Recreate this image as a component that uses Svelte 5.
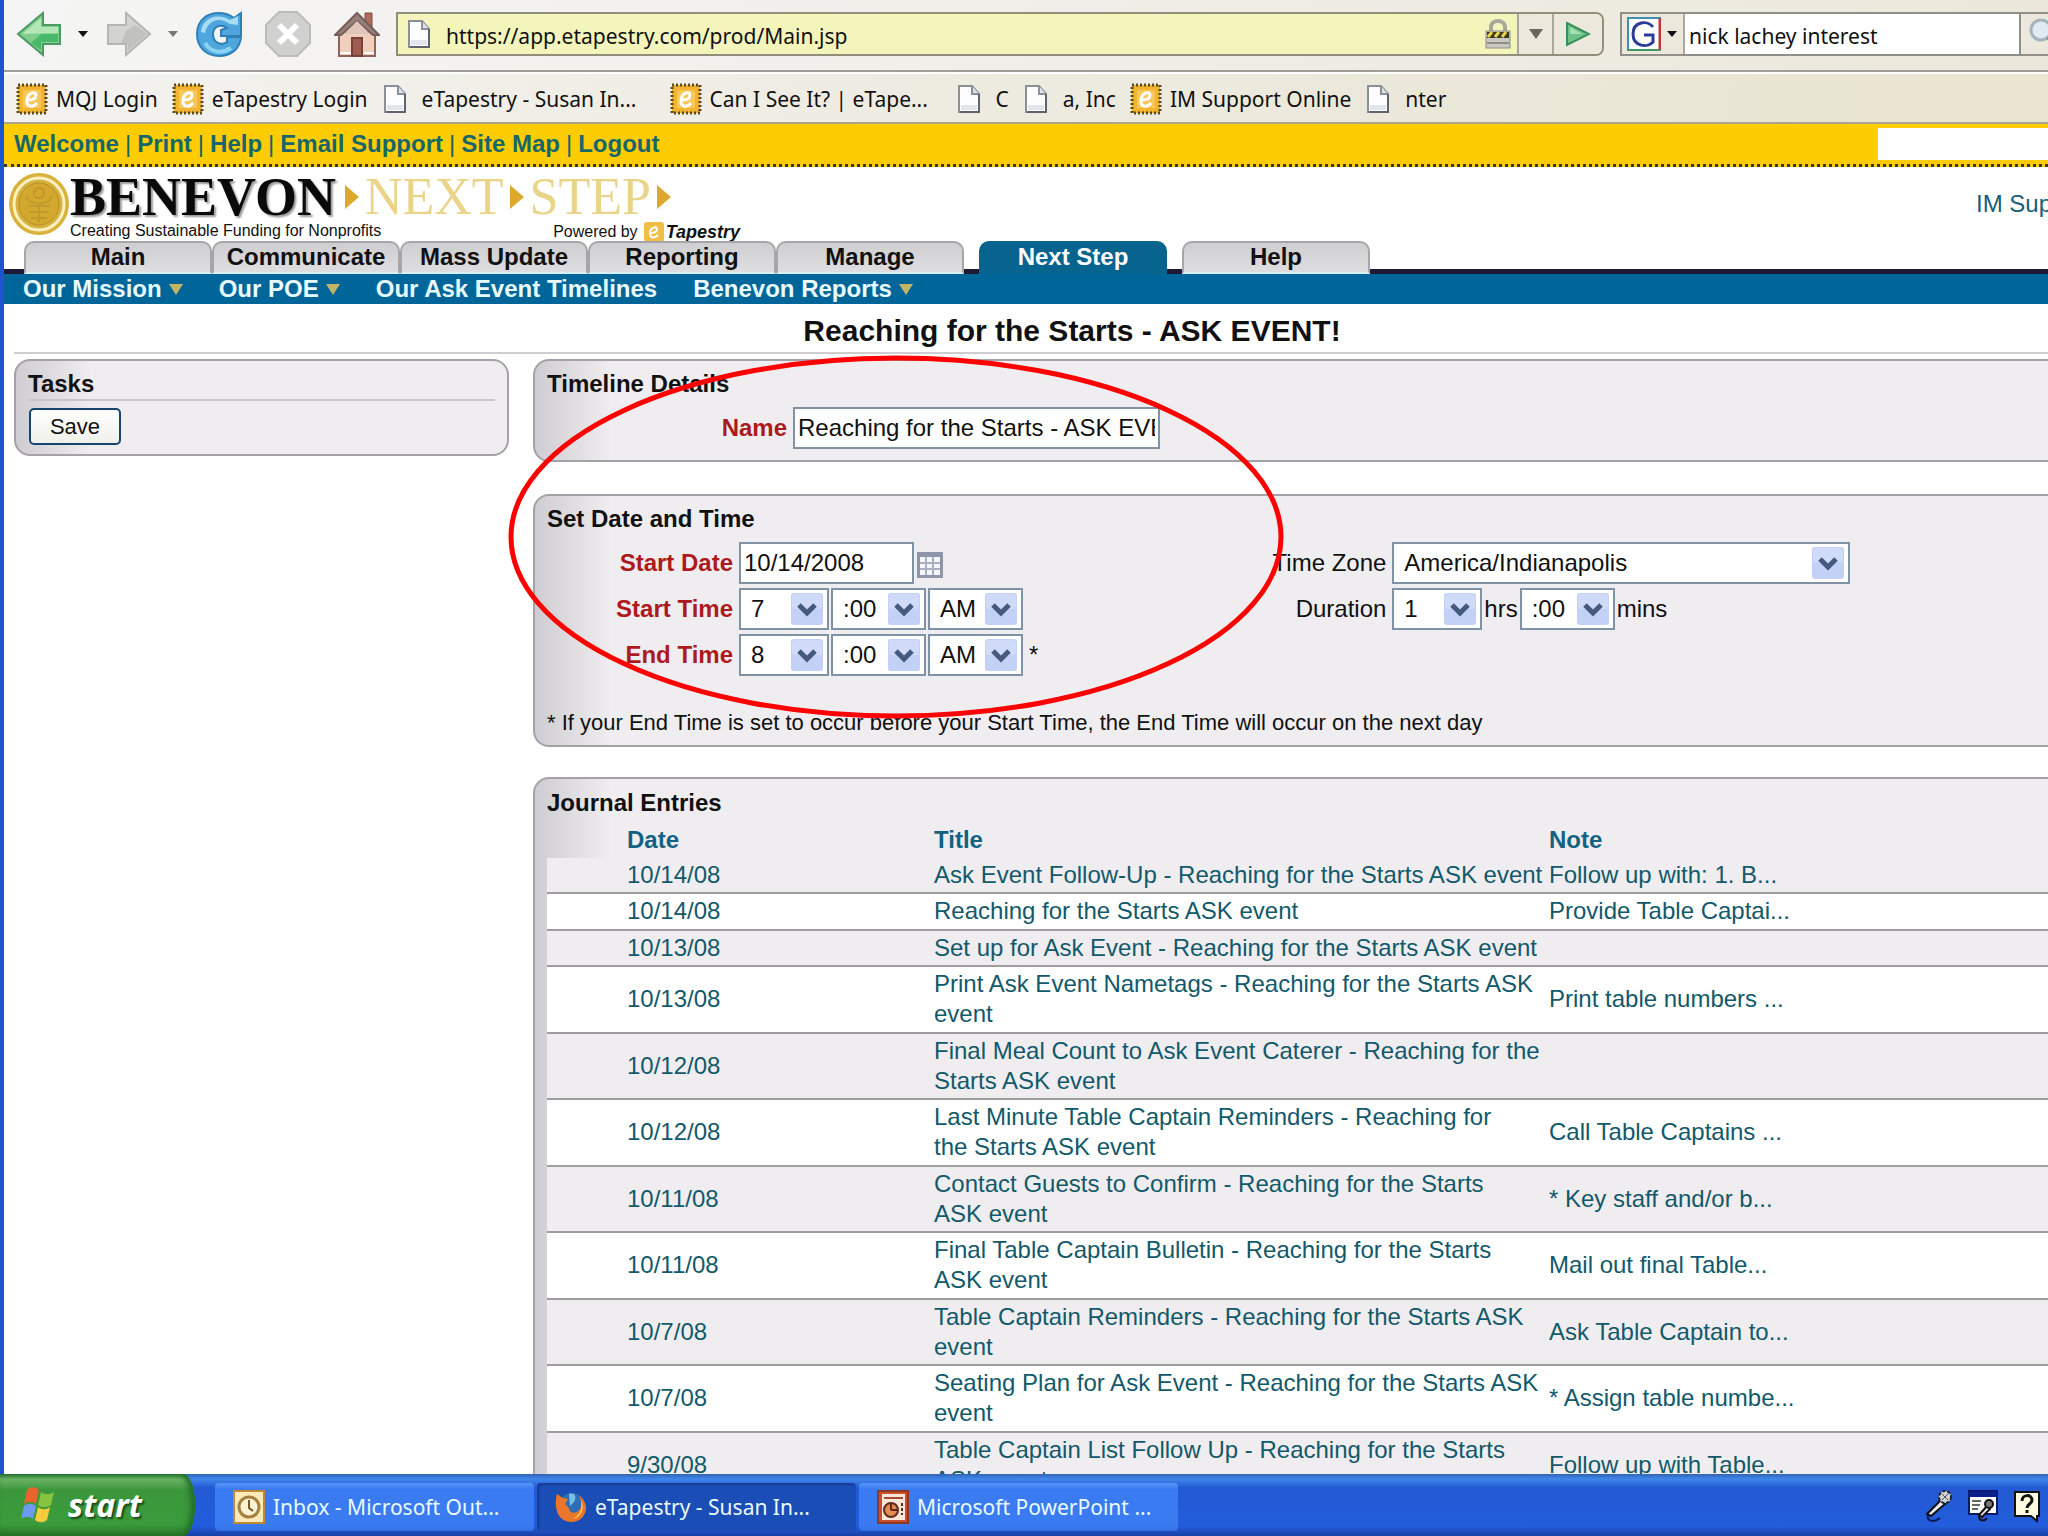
<script>
	let name = "Reaching for the Starts - ASK EVENT!";
	let startDate = "10/14/2008";
	let search = "nick lachey interest";
	let url = "https://app.etapestry.com/prod/Main.jsp";
	let find = "";

	const bookmarks = [
		{ icon: 'e', text: 'MQJ Login' },
		{ icon: 'e', text: 'eTapestry Login' },
		{ icon: 'doc', text: 'eTapestry - Susan In...', long: true },
		{ icon: 'e', text: 'Can I See It? | eTape...', long: true },
		{ icon: 'doc', text: 'C' },
		{ icon: 'doc', text: 'a, Inc' },
		{ icon: 'e', text: 'IM Support Online' },
		{ icon: 'doc', text: 'nter' }
	];

	const links = ['Welcome', 'Print', 'Help', 'Email Support', 'Site Map', 'Logout'];
	const tabs = ['Main', 'Communicate', 'Mass Update', 'Reporting', 'Manage'];

	const menu = [
		{ text: 'Our Mission', arrow: true },
		{ text: 'Our POE', arrow: true },
		{ text: 'Our Ask Event Timelines', arrow: false },
		{ text: 'Benevon Reports', arrow: true }
	];

	const entries = [
		{ date: '10/14/08', title: 'Ask Event Follow-Up - Reaching for the Starts ASK event', note: 'Follow up with: 1. B...' },
		{ date: '10/14/08', title: 'Reaching for the Starts ASK event', note: 'Provide Table Captai...' },
		{ date: '10/13/08', title: 'Set up for Ask Event - Reaching for the Starts ASK event', note: '' },
		{ date: '10/13/08', title: 'Print Ask Event Nametags - Reaching for the Starts ASK\nevent', note: 'Print table numbers ...' },
		{ date: '10/12/08', title: 'Final Meal Count to Ask Event Caterer - Reaching for the\nStarts ASK event', note: '' },
		{ date: '10/12/08', title: 'Last Minute Table Captain Reminders - Reaching for\nthe Starts ASK event', note: 'Call Table Captains ...' },
		{ date: '10/11/08', title: 'Contact Guests to Confirm - Reaching for the Starts\nASK event', note: '* Key staff and/or b...' },
		{ date: '10/11/08', title: 'Final Table Captain Bulletin - Reaching for the Starts\nASK event', note: 'Mail out final Table...' },
		{ date: '10/7/08', title: 'Table Captain Reminders - Reaching for the Starts ASK\nevent', note: 'Ask Table Captain to...' },
		{ date: '10/7/08', title: 'Seating Plan for Ask Event - Reaching for the Starts ASK\nevent', note: '* Assign table numbe...' },
		{ date: '9/30/08', title: 'Table Captain List Follow Up - Reaching for the Starts\nASK event', note: 'Follow up with Table...' }
	];
</script>

{#snippet doc()}
	<svg class="page" viewBox="0 0 22 28" aria-hidden="true">
		<path d="M1 1h13l7 8v18H1z" fill="#fdfdff" stroke="#8b8f98" stroke-width="2" />
		<path d="M3 20h16v5H3z" fill="#e3e5ec" />
		<path d="M14 1v8h7" fill="#dfe2ea" stroke="#8b8f98" stroke-width="2" />
		<path d="M21 9v18H2" fill="none" stroke="#5f636e" stroke-width="2" />
	</svg>
{/snippet}

{#snippet stamp()}
	<svg class="stamp" viewBox="0 0 32 32" aria-hidden="true">
		<rect x="2" y="2" width="28" height="28" fill="#f0b32c" stroke="#5c4a22" stroke-width="3" stroke-dasharray="2 2" />
		<rect x="4" y="4" width="24" height="24" fill="#f3b531" />
		<rect x="7" y="7" width="18" height="18" fill="#f7c75a" />
		<path d="M12 17c5 0 8-2 8-5 0-4-8-3-9 5-1 7 6 8 10 3" fill="none" stroke="#fff" stroke-width="3" />
	</svg>
{/snippet}

{#snippet pick(id, value, size, label)}
	<span class="pick {size}">
		<select {id} aria-label={label}><option>{value}</option></select>
		<svg viewBox="0 0 32 32" aria-hidden="true">
			<rect width="32" height="32" rx="3" fill="#c3d1f6" />
			<rect x="1" y="1" width="30" height="15" rx="3" fill="#d0dbf9" />
			<path d="M8 12l8 8 8-8" fill="none" stroke="#46597f" stroke-width="5" />
		</svg>
	</span>
{/snippet}

<div class="screen">
	<div class="browser">
		<div class="toolbar">
			<button class="ico back" aria-label="Back">
				<svg viewBox="0 0 46 46">
					<path d="M2 23L27 2v12h17v19H27v11z" fill="#7fce8e" stroke="#4c9a63" stroke-width="2" />
					<path d="M6 23L25 7v9h17v6z" fill="#b5e6b5" />
					<path d="M15 32l10-9h17v8H25v8z" fill="#49b868" />
				</svg>
			</button>
			<svg class="caret" viewBox="0 0 10 6"><path d="M0 0h10L5 6z" fill="#111" /></svg>
			<button class="ico forward" aria-label="Forward">
				<svg viewBox="0 0 46 46">
					<path d="M44 23L20 2v12H2v19h18v11z" fill="#d3d3d2" stroke="#b5b5b4" stroke-width="2" />
					<path d="M20 20l9-6 12 9-19 17v-8h-7z" fill="#c1c1c0" />
				</svg>
			</button>
			<svg class="caret" viewBox="0 0 10 6"><path d="M0 0h10L5 6z" fill="#777" /></svg>
			<button class="ico reload" aria-label="Reload">
				<svg viewBox="0 0 46 46">
					<path d="M45 2v23H25v-6l6-2c-7-5-14-1-14 6 0 9 8 12 14 8v-5h14C44 38 35 45 23 45 10 45 1 36 1 23S10 2 23 2c6 0 11 2 15 5z" fill="#4ea6dc" stroke="#2f7fb9" stroke-width="2" />
					<path d="M5 21C6 8 20 1 34 9l8-4v9L34 13C22 5 12 10 9 22z" fill="#a7dcf5" />
					<path d="M9 32c6 10 17 11 26 5" fill="none" stroke="#8bd3f3" stroke-width="4" />
				</svg>
			</button>
			<button class="ico stop" aria-label="Stop">
				<svg viewBox="0 0 46 46">
					<path d="M14 1h18l13 13v18L32 45H14L1 32V14z" fill="#d0d0cf" stroke="#bcbcbb" stroke-width="2" />
					<path d="M14 14l18 18M32 14L14 32" stroke="#fff" stroke-width="6" />
				</svg>
			</button>
			<button class="ico home" aria-label="Home">
				<svg viewBox="0 0 46 46">
					<path d="M31 2h7v14l-7-6z" fill="#b06b5d" stroke="#7d4f47" />
					<path d="M5 21h36v24H5z" fill="#f1cdbd" stroke="#8e6359" stroke-width="2" />
					<path d="M1 24L23 2l22 22h-6L23 10 7 24z" fill="#98807a" stroke="#745e59" stroke-width="2" />
					<path d="M23 10l13 13H10z" fill="#dec6bb" />
					<path d="M18 27h10v18H18z" fill="#9d5d50" stroke="#774137" stroke-width="2" />
					<path d="M6 42h11M30 42h10" stroke="#fff" stroke-width="2" />
				</svg>
			</button>
			<div class="address">
				{@render doc()}
				<input aria-label="Address" bind:value={url}>
				<svg class="lock" viewBox="0 0 26 30" aria-hidden="true">
					<path d="M6 13V8c0-8 14-8 14 0v5" fill="none" stroke="#a7a79c" stroke-width="4" />
					<rect x="1" y="12" width="24" height="17" fill="#c9c9c4" stroke="#8d8d84" />
					<path d="M2 13h22v6H2z" fill="#3b3920" />
					<path d="M3 18l4-5M10 18l4-5M17 18l4-5" stroke="#e9d452" stroke-width="3" />
					<path d="M2 24h22" stroke="#8d8d84" stroke-width="2" />
				</svg>
				<button class="drop" aria-label="History"><svg viewBox="0 0 14 10"><path d="M0 0h14L7 10z" fill="#666660" /></svg></button>
				<button class="go" aria-label="Go"><svg viewBox="0 0 26 26"><path d="M2 2l22 11L2 24z" fill="#6fc389" stroke="#37905a" stroke-width="2" /><path d="M5 6l12 7H5z" fill="#a4e0b2" /></svg></button>
			</div>
			<div class="searchbox">
				<button class="engine" aria-label="Search engine">
					<svg class="g" viewBox="0 0 34 34">
						<rect x="1" y="1" width="32" height="32" fill="#fff" stroke="#3f8fb0" stroke-width="2" />
						<path d="M33 1v32" stroke="#c3352f" stroke-width="3" />
						<path d="M1 33h32" stroke="#3b9a5c" stroke-width="2" />
						<path d="M26 10C21 3 6 4 6 17s15 14 20 8v-7h-9" fill="none" stroke="#2b3c9b" stroke-width="3" />
					</svg>
					<svg class="caret" viewBox="0 0 10 6"><path d="M0 0h10L5 6z" fill="#111" /></svg>
				</button>
				<input aria-label="Search the web" bind:value={search}>
				<button class="glass" aria-label="Search"><svg viewBox="0 0 34 34"><circle cx="13" cy="13" r="10" fill="#dfeaf2" stroke="#a6b3bd" stroke-width="3" /><path d="M20 20l12 12" stroke="#8c8c8c" stroke-width="5" /></svg></button>
			</div>
		</div>

		<nav class="bookmarks">
			{#each bookmarks as b}
				<a href="#top" class={b.icon} class:long={b.long}>
					{#if b.icon == 'e'}{@render stamp()}{:else}{@render doc()}{/if}
					{b.text}
				</a>
			{/each}
		</nav>

		<div class="top">
			<nav>
				{#each links as l, i}{#if i > 0}<span>|</span>{/if}<a href="#top">{l}</a>{/each}
			</nav>
			<input aria-label="Find" bind:value={find}>
		</div>

		<header>
			<svg class="seal" viewBox="0 0 62 64" aria-hidden="true">
				<ellipse cx="31" cy="32" rx="30" ry="31" fill="#d9b23c" />
				<ellipse cx="31" cy="32" rx="25" ry="26" fill="#d6b040" stroke="#fbf0c0" stroke-width="3" />
				<ellipse cx="31" cy="32" rx="20" ry="21" fill="#d2a82f" stroke="#b98f22" stroke-width="1" />
				<circle cx="31" cy="21" r="5" fill="none" stroke="#bf972a" stroke-width="2" />
				<path d="M18 24c2 10 24 10 26 0M20 34h22M21 40h20M23 46h16M31 30v20" fill="none" stroke="#c09a2c" stroke-width="2" />
			</svg>
			<div class="brand">
				<div class="words">
					<b>BENEVON</b>
					<svg viewBox="0 0 16 26"><path d="M1 1l14 12L1 25z" fill="#dba92c" /></svg>
					<span>NEXT</span>
					<svg viewBox="0 0 16 26"><path d="M1 1l14 12L1 25z" fill="#dba92c" /></svg>
					<span>STEP</span>
					<svg viewBox="0 0 16 26"><path d="M1 1l14 12L1 25z" fill="#dba92c" /></svg>
				</div>
				<div class="tagline">
					<span>Creating Sustainable Funding for Nonprofits</span>
					<span class="powered">Powered by
						<svg viewBox="0 0 20 20"><rect width="20" height="20" rx="3" fill="#f0bd45" /><path d="M6 11c4 0 7-1 7-4s-7-2-7 4 5 5 8 2" fill="none" stroke="#fff" stroke-width="2" /></svg><i>Tapestry</i></span>
				</div>
			</div>
			<a class="user" href="#top">IM Sup</a>
		</header>

		<nav class="tabs">
			{#each tabs as t}<a href="#top">{t}</a>{/each}
			<a href="#top" class="apart on">Next Step</a>
			<a href="#top" class="apart">Help</a>
		</nav>
		<nav class="menu">
			{#each menu as m}
				<a href="#top">{m.text}{#if m.arrow}<svg viewBox="0 0 14 11"><path d="M0 0h14L7 11z" fill="#c3b566" /></svg>{/if}</a>
			{/each}
		</nav>

		<main>
			<h1>Reaching for the Starts - ASK EVENT!</h1>
			<div class="columns">
				<aside class="panel">
					<h2>Tasks</h2>
					<button class="save">Save</button>
				</aside>

				<div class="content">
					<section class="panel details">
						<h2>Timeline Details</h2>
						<div class="field">
							<label class="req" for="name">Name</label>
							<input id="name" bind:value={name}>
						</div>
					</section>

					<section class="panel when">
						<h2>Set Date and Time</h2>
						<div class="cols">
							<div class="grid">
								<label class="req" for="date">Start Date</label>
								<div class="row">
									<input id="date" bind:value={startDate}>
									<button class="cal" aria-label="Calendar">
										<svg viewBox="0 0 28 28">
											<rect x="1" y="1" width="26" height="26" fill="#8e95a8" />
											<rect x="4" y="6" width="20" height="18" fill="#f4f6fb" />
											<path d="M4 12h20M4 18h20M10 6v18M17 6v18" stroke="#a9b0c3" stroke-width="2" />
										</svg>
									</button>
								</div>
								<label class="req" for="sh">Start Time</label>
								<div class="row">
									{@render pick('sh', '7', 'small', 'Start hour')}
									{@render pick('sm', ':00', 'mid', 'Start minute')}
									{@render pick('sa', 'AM', 'mid', 'Start AM or PM')}
								</div>
								<label class="req" for="eh">End Time</label>
								<div class="row">
									{@render pick('eh', '8', 'small', 'End hour')}
									{@render pick('em', ':00', 'mid', 'End minute')}
									{@render pick('ea', 'AM', 'mid', 'End AM or PM')}
									<span class="star">*</span>
								</div>
							</div>
							<div class="grid">
								<label for="tz">Time Zone</label>
								<div class="row">{@render pick('tz', 'America/Indianapolis', 'wide', 'Time Zone')}</div>
								<label for="dh">Duration</label>
								<div class="row">
									{@render pick('dh', '1', 'small', 'Duration hours')}
									<span>hrs</span>
									{@render pick('dm', ':00', 'mid', 'Duration minutes')}
									<span>mins</span>
								</div>
							</div>
						</div>
						<p>* If your End Time is set to occur before your Start Time, the End Time will occur on the next day</p>
					</section>

					<section class="panel journal">
						<h2>Journal Entries</h2>
						<table>
							<colgroup><col class="c1"><col class="c2"><col></colgroup>
							<thead>
								<tr><th>Date</th><th>Title</th><th>Note</th></tr>
							</thead>
							<tbody>
								{#each entries as e}
									<tr>
										<td><a href="#top">{e.date}</a></td>
										<td><a href="#top">{e.title}</a></td>
										<td><a href="#top">{e.note}</a></td>
									</tr>
								{/each}
							</tbody>
						</table>
					</section>
				</div>

				<svg class="ring" viewBox="0 0 776 364" aria-hidden="true">
					<ellipse cx="388" cy="182" rx="385" ry="179" fill="none" stroke="#fe0000" stroke-width="5" />
				</svg>
			</div>
		</main>
	</div>

	<footer>
		<button class="start">
			<svg viewBox="0 0 38 38" aria-hidden="true">
				<path d="M7 4c4-4 8-3 12 0l-3 14c-4-3-8-3-12 0z" fill="#e8642c" />
				<path d="M21 6c4 3 8 3 13 0l-3 13c-5 3-9 3-13 0z" fill="#86c440" />
				<path d="M4 20c4-3 8-3 12 0l-3 13c-4-3-8-3-12 0z" fill="#6d9af0" />
				<path d="M18 21c4 3 8 3 12 0l-3 13c-4 3-8 3-12 0z" fill="#f6cb3c" />
			</svg>
			<i>start</i>
		</button>
		<button class="task">
			<svg viewBox="0 0 32 34" aria-hidden="true">
				<rect x="1" y="1" width="30" height="32" fill="#fbe9b8" stroke="#c08a35" stroke-width="2" />
				<circle cx="16" cy="17" r="10" fill="#fdf3d3" stroke="#a58140" stroke-width="3" />
				<path d="M16 10v8l4 3" fill="none" stroke="#75592a" stroke-width="2" />
			</svg>
			Inbox - Microsoft Out...
		</button>
		<button class="task active">
			<svg viewBox="0 0 32 32" aria-hidden="true">
				<circle cx="17" cy="15" r="13" fill="#2d6fb4" />
				<path d="M14 3c6-2 8 3 5 8l-4 4z" fill="#79bfe4" />
				<path d="M2 3l6 4 5 1-3 5 4 4c0 7 11 6 12-2 1-4-1-8-2-10 7 4 9 13 5 19-5 9-18 9-24 2C0 20 0 10 2 3z" fill="#e9762b" />
				<path d="M26 9c4 8 1 17-8 19 8-5 9-11 8-19z" fill="#f8c850" />
			</svg>
			eTapestry - Susan In...
		</button>
		<button class="task">
			<svg viewBox="0 0 32 34" aria-hidden="true">
				<rect x="1" y="1" width="30" height="32" fill="#c9502f" stroke="#8d3822" stroke-width="2" />
				<rect x="5" y="4" width="23" height="26" fill="#fde6da" />
				<path d="M7 8h19" stroke="#a84a30" stroke-width="2" />
				<circle cx="14" cy="20" r="7" fill="#e88a4e" stroke="#5e2b1c" stroke-width="2" />
				<path d="M14 20v-7M14 20h7" stroke="#5e2b1c" stroke-width="2" />
				<path d="M25 13v12" stroke="#5e2b1c" stroke-width="2" stroke-dasharray="3 2" />
			</svg>
			Microsoft PowerPoint ...
		</button>
		<div class="tray">
			<svg viewBox="0 0 30 34" aria-hidden="true">
				<path d="M3 25L17 11l4 4L7 27z" fill="#e6e9ee" stroke="#111" stroke-width="2" />
				<circle cx="21" cy="8" r="6" fill="#cfd2d6" stroke="#222" stroke-width="2" stroke-dasharray="3 2" />
				<path d="M18 5l6 6M24 5l-6 6" stroke="#555" />
				<path d="M4 26c-2 6 6 8 12 3" fill="none" stroke="#0a1550" stroke-width="2" />
			</svg>
			<svg viewBox="0 0 30 34" aria-hidden="true">
				<rect x="1" y="2" width="28" height="23" fill="#fff" stroke="#0a1a66" stroke-width="2" />
				<rect x="1" y="2" width="28" height="6" fill="#0b1f8c" />
				<path d="M4 12h9M4 16h8M4 20h6" stroke="#666" stroke-width="2" />
				<path d="M11 26l8-9 3 3-8 8z" fill="#eee" stroke="#111" stroke-width="2" />
				<circle cx="21" cy="15" r="4" fill="#777" stroke="#111" stroke-width="2" />
				<path d="M11 27c0 6 6 5 8 2" fill="none" stroke="#111" stroke-width="2" />
			</svg>
			<svg viewBox="0 0 30 34" aria-hidden="true">
				<path d="M3 3h24v24h-2v5l-6-5H3z" fill="#fffbe0" stroke="#111" stroke-width="2" />
				<path d="M10 12c0-7 10-7 10-1 0 4-5 4-5 8M15 21v3" fill="none" stroke="#111" stroke-width="3" />
			</svg>
		</div>
	</footer>
</div>

<style>
	:global(body) {
		background: #fff;
	}

	* {
		box-sizing: border-box;
	}

	.screen {
		height: 100vh;
		display: flex;
		flex-direction: column;
		overflow: hidden;
		font: 24px/30px "Liberation Sans", Arial, sans-serif;
		color: #111;
	}

	.browser {
		flex: 1;
		min-height: 0;
		overflow: hidden;
		border-left: 4px solid #1c55cf;
	}

	button, input, select {
		font: inherit;
		color: inherit;
		margin: 0;
		padding: 0;
		border: 0;
		border-radius: 0;
		background: none;
	}

	a {
		color: inherit;
		text-decoration: none;
		white-space: nowrap;
	}

	svg {
		display: block;
		flex: none;
	}

	.toolbar, .bookmarks, footer {
		font-family: "Noto Sans", Tahoma, sans-serif;
		font-size: 21px;
	}

	/* browser chrome */
	.toolbar {
		display: flex;
		align-items: center;
		height: 72px;
		padding: 0 0 2px 12px;
		background: linear-gradient(100deg, #f5f5f5, #efede6 60%, #ebe7da);
		border-bottom: 2px solid #9f9d98;
	}

	.ico svg {
		width: 46px;
		height: 46px;
	}

	.caret {
		width: 10px;
		height: 6px;
	}

	.back, .forward {
		margin-right: 16px;
	}

	.forward {
		margin-left: 18px;
	}

	.reload {
		margin-left: 18px;
	}

	.stop, .home {
		margin-left: 23px;
	}

	.address {
		flex: 1;
		display: flex;
		align-items: center;
		height: 44px;
		margin-left: 16px;
		padding-left: 10px;
		border: 2px solid #918f7c;
		border-radius: 0 8px 8px 0;
		background: #f3f5bb;
	}

	.address input {
		flex: 1;
		min-width: 0;
		height: 30px;
		margin: 3px 0 0 16px;
	}

	.page {
		width: 22px;
		height: 28px;
	}

	.lock {
		width: 26px;
		height: 30px;
		margin-right: 6px;
	}

	.drop, .go {
		height: 100%;
		display: grid;
		place-items: center;
		background: #ece9dc;
		border-left: 2px solid #aaa899;
	}

	.drop {
		width: 35px;
	}

	.go {
		width: 50px;
		border-radius: 0 6px 6px 0;
	}

	.drop svg {
		width: 14px;
		height: 10px;
	}

	.go svg {
		width: 26px;
		height: 26px;
	}

	.searchbox {
		display: flex;
		width: 428px;
		height: 44px;
		margin-left: 16px;
		border: 2px solid #918f8a;
		border-right: 0;
		background: #fff;
	}

	.searchbox input {
		flex: 1;
		min-width: 0;
		padding: 3px 0 0 4px;
	}

	.engine {
		display: flex;
		align-items: center;
		gap: 6px;
		padding: 0 6px 0 5px;
		background: #ece9dc;
		border-right: 2px solid #aaa8a0;
	}

	.g {
		width: 34px;
		height: 34px;
	}

	.glass {
		width: 29px;
		overflow: hidden;
		padding-left: 7px;
		background: #ece9dc;
		border-left: 2px solid #918f8a;
	}

	.glass svg {
		width: 34px;
		height: 34px;
	}

	.bookmarks {
		display: flex;
		align-items: center;
		gap: 14px;
		height: 52px;
		padding: 2px 0 0 12px;
		background: linear-gradient(100deg, #f3f2ef, #ebe8da 70%, #e9e5d0);
		border-top: 2px solid #fff;
		border-bottom: 2px solid #a9a48c;
	}

	.bookmarks a {
		display: flex;
		align-items: center;
		gap: 8px;
	}

	.bookmarks .doc {
		gap: 16px;
		margin-left: 2px;
	}

	.bookmarks .long {
		width: 272px;
	}

	.stamp {
		width: 32px;
		height: 32px;
	}

	/* site header */
	.top {
		display: flex;
		justify-content: space-between;
		height: 43px;
		background: #fdcc02;
		border-bottom: 3px dotted #3c3524;
	}

	.top nav {
		padding: 5px 0 0 10px;
		font-weight: bold;
		color: #17666a;
	}

	.top span {
		margin: 0 6px;
		font-weight: normal;
	}

	.top input {
		width: 170px;
		height: 32px;
		margin-top: 4px;
		background: #fff;
	}

	header {
		display: flex;
		height: 74px;
		padding: 5px 0 0 4px;
	}

	.seal {
		width: 62px;
		height: 64px;
	}

	.words {
		display: flex;
		align-items: center;
		gap: 5px;
		height: 50px;
		font: 52px/50px "Liberation Serif", "Times New Roman", serif;
		color: #ead48a;
	}

	.words b {
		color: #0a0a0a;
		font-size: 54px;
		text-shadow: 2px 2px 2px #999;
		margin-right: 3px;
	}

	.words svg {
		width: 16px;
		height: 26px;
	}

	.tagline {
		display: flex;
		justify-content: space-between;
		width: 670px;
		font-size: 16px;
		line-height: 18px;
	}

	.powered {
		display: flex;
		gap: 2px;
		align-items: center;
	}

	.powered svg {
		width: 20px;
		height: 20px;
		margin-left: 4px;
	}

	.powered i {
		font-size: 18px;
		font-weight: bold;
	}

	.user {
		margin-left: auto;
		width: 72px;
		padding-top: 17px;
		color: #17607a;
	}

	.tabs {
		display: flex;
		height: 33px;
		padding-left: 20px;
		background: linear-gradient(to top, #1e1a38 5px, transparent 5px);
	}

	.tabs a {
		width: 188px;
		border: 2px solid #a6a5a7;
		border-bottom: 2px solid #d8f0f8;
		border-radius: 10px 10px 0 0;
		background: linear-gradient(#cfced0, #dedddf);
		font-weight: bold;
		line-height: 28px;
		text-align: center;
	}

	.tabs .apart {
		margin-left: 15px;
	}

	.tabs .on {
		background: #07648f;
		border-color: #07648f;
		color: #fff;
	}

	.menu {
		display: flex;
		height: 30px;
		gap: 36px;
		padding-left: 19px;
		background: #006699;
		color: #e8fbff;
		font-weight: bold;
	}

	.menu a {
		display: flex;
		align-items: center;
		gap: 7px;
	}

	.menu svg {
		width: 14px;
		height: 11px;
	}

	/* page body, wider than the window */
	main {
		margin: 0 -82px 0 10px;
	}

	h1 {
		margin: 0;
		height: 50px;
		border-bottom: 2px solid #cfcdd0;
		font-size: 30px;
		line-height: 54px;
		text-align: center;
	}

	h2 {
		margin: 0;
		font-size: 24px;
		line-height: 30px;
	}

	.columns {
		position: relative;
		display: flex;
		align-items: flex-start;
		gap: 24px;
		padding-top: 5px;
	}

	.panel {
		border: 2px solid #a4a2a6;
		border-radius: 16px;
		background: linear-gradient(to right, #cfcdd1, #efedef 76px);
		padding: 8px 12px;
	}

	aside {
		width: 495px;
		height: 97px;
	}

	aside h2 {
		border-bottom: 2px solid #c8c6ca;
		height: 32px;
		margin-bottom: 7px;
	}

	.save {
		width: 92px;
		height: 37px;
		margin-left: 1px;
		border: 2px solid #17456f;
		border-radius: 5px;
		background: linear-gradient(#fff, #f0f0ea);
		font-size: 22px;
	}

	.content {
		flex: 1;
		min-width: 0;
	}

	.req {
		color: #ac1a20;
		font-weight: bold;
	}

	.details {
		height: 103px;
		margin-bottom: 32px;
	}

	.field {
		display: flex;
		align-items: center;
		gap: 6px;
		padding-top: 8px;
	}

	.field label {
		width: 240px;
		text-align: right;
	}

	.content input, .pick {
		height: 42px;
		border: 2px solid #7f93a5;
		background: #fff;
	}

	.content input {
		padding: 0 3px;
	}

	#name {
		width: 367px;
	}

	#date {
		width: 175px;
	}

	.when {
		height: 253px;
		margin-bottom: 30px;
	}

	.cols {
		display: flex;
		align-items: flex-start;
	}

	.grid {
		display: grid;
		grid-template-columns: 186px auto;
		gap: 4px 6px;
		align-items: center;
		padding-top: 8px;
	}

	.grid + .grid {
		margin-left: 162px;
	}

	.grid label {
		text-align: right;
	}

	.row {
		display: flex;
		align-items: center;
		gap: 2px;
	}

	.cal {
		margin-top: 4px;
	}

	.cal svg {
		width: 28px;
		height: 28px;
	}

	.star {
		margin-left: 4px;
	}

	.pick {
		position: relative;
		display: block;
	}

	.small {
		width: 90px;
	}

	.mid {
		width: 95px;
	}

	.wide {
		width: 458px;
	}

	.pick select {
		appearance: none;
		width: 100%;
		height: 100%;
		padding-left: 10px;
	}

	.pick svg {
		position: absolute;
		right: 4px;
		top: 3px;
		width: 32px;
		height: 32px;
		pointer-events: none;
	}

	p {
		margin: 32px 0 0;
		font-size: 22px;
	}

	.journal {
		border-radius: 16px 16px 0 0;
		padding-top: 9px;
	}

	table {
		width: 100%;
		border-collapse: separate;
		border-spacing: 0;
		table-layout: fixed;
		color: #12596b;
	}

	.c1 {
		width: 387px;
	}

	.c2 {
		width: 615px;
	}

	th {
		padding: 7px 0 3px;
		text-align: left;
		color: #136283;
	}

	td {
		padding: 2px 0;
		height: 36px;
		border-bottom: 2px solid #9f9da0;
	}

	td a {
		white-space: pre;
	}

	th:first-child, td:first-child {
		padding-left: 80px;
	}

	tbody tr {
		background: #efedef;
	}

	tbody tr:nth-child(even) {
		background: #fff;
	}

	tbody tr:nth-child(even) td {
		padding-bottom: 3px;
	}

	.ring {
		position: absolute;
		left: 494px;
		top: 1px;
		width: 776px;
		height: 364px;
		pointer-events: none;
	}

	/* taskbar */
	footer {
		display: flex;
		align-items: center;
		height: 62px;
		background: linear-gradient(#3165b5, #3f86ea 5px, #2359d3 14px, #235ddc 52px, #1840a5);
		color: #e9fbff;
	}

	.start {
		display: flex;
		align-items: center;
		gap: 10px;
		width: 195px;
		height: 100%;
		margin-right: 20px;
		padding-left: 20px;
		border-radius: 0 12px 12px 0 / 0 30px 30px 0;
		background: linear-gradient(#2d7a35, #6cb566 5px, #3c963c 16px, #3a9c3a 50px, #2a752a);
		box-shadow: inset -4px 0 6px #1f6a26;
		color: #fff;
	}

	.start svg {
		width: 38px;
		height: 38px;
	}

	.start i {
		font: italic bold 32px/40px "Open Sans", sans-serif;
		text-shadow: 2px 2px 2px #1c4a1c;
	}

	.task {
		display: flex;
		align-items: center;
		gap: 8px;
		width: 319px;
		height: 48px;
		margin: 4px 3px 0 0;
		padding-left: 18px;
		border-radius: 4px;
		background: linear-gradient(#5796f8, #3b7bf1 6px, #3b7bf1 42px, #3370e4);
		white-space: nowrap;
	}

	.task svg {
		width: 32px;
		height: 34px;
	}

	.task.active {
		background: #1b4db6;
		box-shadow: inset 2px 2px 2px #153c93;
	}

	.tray {
		display: flex;
		gap: 14px;
		margin: 2px 6px 0 auto;
	}

	.tray svg {
		width: 30px;
		height: 34px;
	}
</style>
